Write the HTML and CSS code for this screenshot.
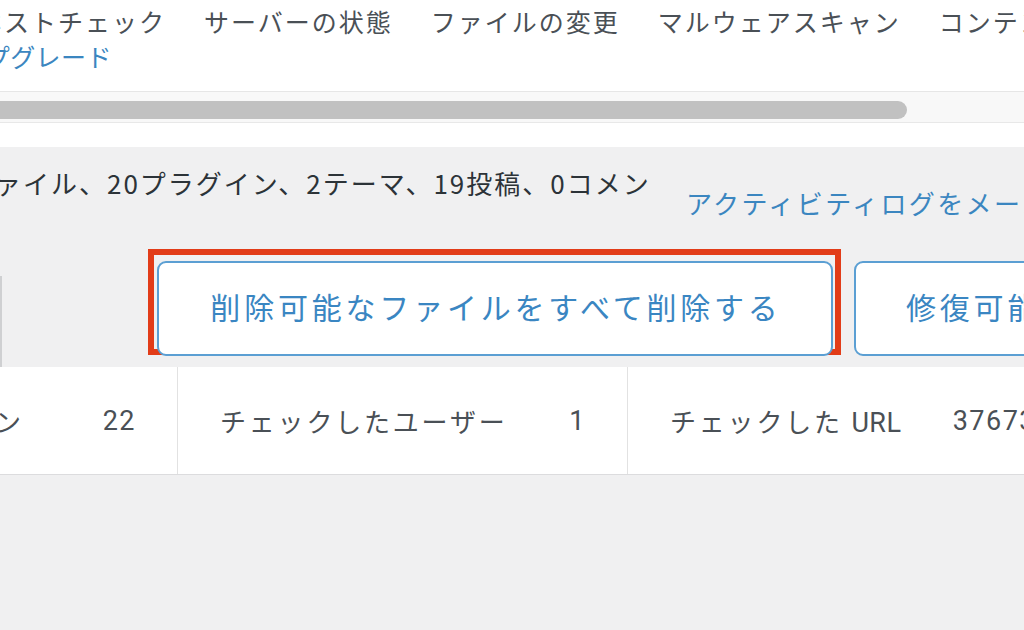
FILE: index.html
```html
<!DOCTYPE html>
<html lang="ja">
<head>
<meta charset="utf-8">
<title>スキャン</title>
<link rel="stylesheet" href="styles.css">
</head>
<body>
<div class="page">
  <header class="header">
    <nav class="tabs">
      <span class="tab">ホストチェック</span>
      <span class="tab">サーバーの状態</span>
      <span class="tab">ファイルの変更</span>
      <span class="tab">マルウェアスキャン</span>
      <span class="tab">コンテンツチェック</span>
    </nav>
    <a class="upgrade">アップグレード</a>
  </header>
  <div class="scrollstrip"><div class="thumb"></div></div>
  <div class="spacer"></div>
  <main class="main">
    <div class="stats">
      <p class="stats-text">ファイル、20プラグイン、2テーマ、19投稿、0コメント</p>
      <a class="log-link">アクティビティログをメールで送信</a>
    </div>
    <div class="actions">
      <div class="stub"></div>
      <div class="highlight">
        <button class="btn">削除可能なファイルをすべて削除する</button>
      </div>
      <button class="btn btn-second">修復可能なファイルをすべて修復する</button>
    </div>
    <div class="summary">
      <div class="cell cell-first"><span class="label">チェックしたプラグイン</span><span class="value">22</span></div>
      <div class="cell"><span class="label">チェックしたユーザー</span><span class="value">1</span></div>
      <div class="cell"><span class="label">チェックした <span class="latin">URL</span></span><span class="value">37673</span></div>
    </div>
  </main>
</div>
</body>
</html>
```
FILE: styles.css
```css
html, body {
  margin: 0;
  padding: 0;
  width: 1024px;
  height: 630px;
  overflow: hidden;
  background: #f0f0f1;
}
body {
  font-family: "Noto Sans CJK JP", "Noto Sans", sans-serif;
}
.page {
  display: flex;
  flex-direction: column;
  width: 1024px;
  overflow: hidden;
}
.header {
  background: #fff;
  height: 92px;
  box-sizing: border-box;
  padding-top: 4px;
  border-bottom: 1px solid #e6e6e6;
  display: flex;
  flex-direction: column;
  overflow: hidden;
}
.tabs {
  display: flex;
  white-space: nowrap;
  font-size: 25px;
  line-height: 35px;
  letter-spacing: 2px;
  color: #4a5056;
  margin-left: -23px;
}
.tab {
  margin-right: 38px;
  flex: none;
}
.upgrade {
  font-size: 25px;
  line-height: 35px;
  color: #3b86c0;
  white-space: nowrap;
  margin-left: -66px;
  letter-spacing: 0.4px;
}
.scrollstrip {
  background: #f8f8f8;
  height: 31px;
  box-sizing: border-box;
  padding-top: 9px;
  border-bottom: 1px solid #e8e8e8;
}
.thumb {
  width: 907px;
  height: 18px;
  margin-left: -20px;
  padding-left: 20px;
  background: #c1c1c1;
  border-radius: 9px;
}
.spacer {
  background: #fff;
  height: 24px;
}
.main {
  background: #f0f0f1;
  display: flex;
  flex-direction: column;
}
.stats {
  display: flex;
  height: 102px;
  white-space: nowrap;
}
.stats-text {
  margin: 0 0 0 -33px;
  padding-top: 18px;
  width: 683px;
  flex: none;
  overflow: hidden;
  font-size: 26px;
  line-height: 36px;
  letter-spacing: 2px;
  color: #2c3338;
}
.log-link {
  margin-left: 36px;
  padding-top: 38px;
  font-size: 26px;
  line-height: 36px;
  letter-spacing: 2.4px;
  color: #3b86c0;
}
.actions {
  display: flex;
  align-items: flex-start;
  height: 118px;
  white-space: nowrap;
}
.stub {
  flex: none;
  width: 2px;
  height: 91px;
  margin-top: 27px;
  background: #cfd0d2;
}
.highlight {
  flex: none;
  margin-left: 146px;
  border: 6px solid #e23c18;
  padding: 6px 2px 5px 3px;
  height: 106px;
  box-sizing: border-box;
  display: flex;
}
.btn {
  flex: none;
  width: 676px;
  height: 95px;
  box-sizing: border-box;
  background: #fff;
  border: 2px solid #5b9fd3;
  border-radius: 9px;
  font-family: "Noto Sans CJK JP", "Noto Sans", sans-serif;
  font-size: 30px;
  letter-spacing: 3.8px;
  color: #3a86c2;
  padding: 0 0 6px 2px;
  text-align: center;
}
.btn-second {
  margin-left: 13px;
  margin-top: 12px;
  text-align: left;
  padding-left: 50px;
}
.summary {
  display: flex;
  height: 107px;
  background: #fff;
  border-bottom: 1px solid #dcdcde;
  margin-left: -335px;
  white-space: nowrap;
}
.cell {
  flex: none;
  width: 450px;
  box-sizing: border-box;
  display: flex;
  align-items: center;
  justify-content: space-between;
  padding: 0 41px 0 42px;
  border-right: 1px solid #e2e2e2;
  font-size: 26px;
  color: #4a5056;
}
.cell-first {
  width: 513px;
}
.label {
  letter-spacing: 2.8px;
}
.latin {
  font-family: "Roboto", "Noto Sans", sans-serif;
  font-size: 27px;
  letter-spacing: 0.4px;
}
.value {
  font-family: "Roboto", "Noto Sans", sans-serif;
  font-size: 27px;
  letter-spacing: 1.5px;
}
```
